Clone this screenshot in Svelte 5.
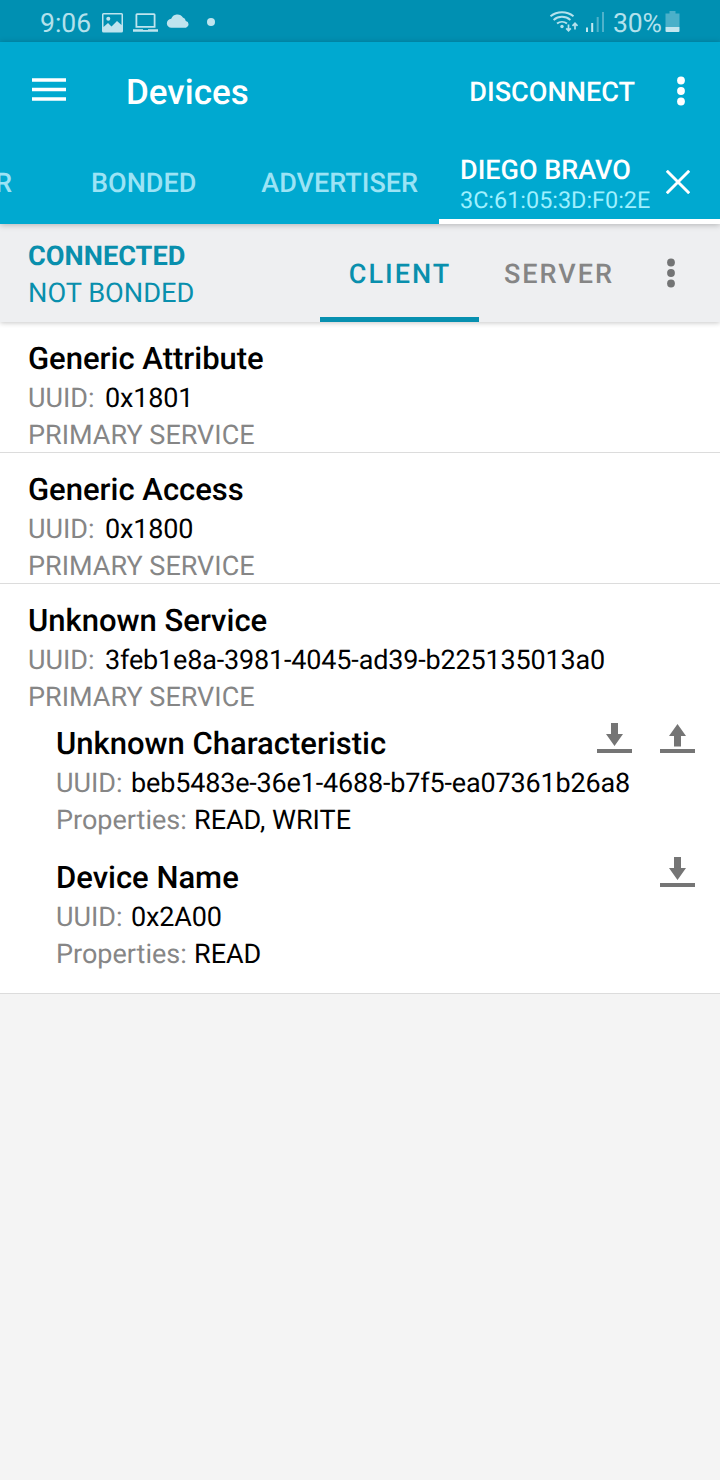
<script>
  const services = [
    { name: 'Generic Attribute', uuid: '0x1801', characteristics: [] },
    { name: 'Generic Access', uuid: '0x1800', characteristics: [] },
    {
      name: 'Unknown Service',
      uuid: '3feb1e8a-3981-4045-ad39-b225135013a0',
      characteristics: [
        { name: 'Unknown Characteristic', uuid: 'beb5483e-36e1-4688-b7f5-ea07361b26a8', props: ['READ', 'WRITE'] },
        { name: 'Device Name', uuid: '0x2A00', props: ['READ'] }
      ]
    }
  ];
</script>

<div class="screen">
  <div class="status">
    <span class="time">9:06</span>
    <svg class="notif" width="120" height="24" viewBox="100 10 120 24" fill="#bfe4ee">
      <path fill-rule="evenodd" d="M103.500 13h18a1.500 1.500 0 0 1 1.500 1.500v16.500a1.500 1.500 0 0 1-1.500 1.500h-18a1.500 1.500 0 0 1-1.500-1.500v-16.500a1.500 1.500 0 0 1 1.500-1.500zM103.500 14.500v12.500l4.500-4 3.500 3.500 5.500-5.500 4.500 4v-10.500z" />
      <circle cx="108.300" cy="18.800" r="2" />
      <path fill-rule="evenodd" d="M137 13.300h17a1.500 1.500 0 0 1 1.500 1.500v13h-20v-13a1.500 1.500 0 0 1 1.500-1.500zM137.300 15v11h16.400v-11zM133 29.300h10v.8h5v-.8h10v2.500h-25z" />
      <path d="M171.500 27.800a4.500 4.500 0 0 1-.3-9a6.500 6.500 0 0 1 11.700-1.300a4.300 4.300 0 0 1 2.900 3.500a3.500 3.500 0 0 1 .2 6.800z" />
      <circle cx="211" cy="22" r="4" />
    </svg>
    <svg class="signal" width="60" height="26" viewBox="548 8 60 26" fill="none">
      <g stroke="#b5e2ed" stroke-width="1.900">
        <path d="M550.500 16.200a18.500 18.500 0 0 1 23 0" />
        <path d="M553.600 19.900a13 13 0 0 1 16.800 0" />
        <path d="M557 23.600a8 8 0 0 1 10 0" />
      </g>
      <circle cx="562" cy="26.500" r="1.700" fill="#b5e2ed" />
      <path d="M568.500 24.500v6.300m-2.300-2.500l2.300 2.500l2.300-2.500M575 29.500v-6.300m-2.500 2.600l2.500-2.600l2.500 2.600" stroke="#b5e2ed" stroke-width="1.700" />
      <path d="M587 27.500v4.500M592.200 23v9" stroke="#c4e8f0" stroke-width="2" />
      <path d="M597.700 17v15M603 12v20" stroke="#4fb2cb" stroke-width="2" />
    </svg>
    <span class="percent">30%</span>
    <svg class="battery" width="15" height="22" viewBox="0 0 15 22">
      <path d="M4.500 0h6v2.500h4v13.500h-14v-13.500h4z" fill="#4bb0c9" />
      <path d="M.5 16h14v4q0 1-1 1h-12q-1 0-1-1z" fill="#c4e6ef" />
    </svg>
  </div>

  <header>
    <div class="toolbar">
      <svg class="menu" width="34" height="24" viewBox="0 0 34 24"><path d="M0 2h34M0 11.500h34M0 21h34" stroke="#fff" stroke-width="3.500" /></svg>
      <h1>Devices</h1>
      <span class="disconnect">DISCONNECT</span>
      <svg class="more" width="10" height="30" viewBox="0 0 10 30" fill="#fff"><circle cx="5" cy="4.500" r="3.900" /><circle cx="5" cy="15" r="3.900" /><circle cx="5" cy="25.500" r="3.900" /></svg>
    </div>
    <nav>
      <span class="tab scanner">SCANNER</span>
      <span class="tab bonded">BONDED</span>
      <span class="tab advertiser">ADVERTISER</span>
      <div class="device">
        <div class="label"><b>DIEGO BRAVO</b><span>3C:61:05:3D:F0:2E</span></div>
        <svg width="24" height="24" viewBox="0 0 24 24"><path d="M.8.800l22.400 22.400M23.200.8l-22.400 22.400" stroke="#fff" stroke-width="2.900" /></svg>
      </div>
    </nav>
  </header>

  <section class="connection">
    <div class="state"><b>CONNECTED</b><span>NOT BONDED</span></div>
    <span class="role active">CLIENT</span>
    <span class="role">SERVER</span>
    <svg class="more2" width="10" height="30" viewBox="0 0 10 30" fill="#737475"><circle cx="5" cy="4.500" r="3.900" /><circle cx="5" cy="15" r="3.900" /><circle cx="5" cy="25.500" r="3.900" /></svg>
  </section>

  <main>
    {#each services as s}
      <article>
        <h2>{s.name}</h2>
        <p class="uuid"><i>UUID:</i><span>{s.uuid}</span></p>
        <p class="type">PRIMARY SERVICE</p>
        {#if s.characteristics.length}
          <div class="chars">
            {#each s.characteristics as c}
              <div class="char">
                <div class="head">
                  <h2>{c.name}</h2>
                  <div class="actions">
                    <svg width="35" height="30" viewBox="0 0 35 30" fill="#757575"><path d="M14 0h7v11h5l-8.500 12l-8.500-12h5zM0 26h35v4h-35z" /></svg>
                    {#if c.props.includes('WRITE')}
                      <svg width="35" height="30" viewBox="0 0 35 30" fill="#757575"><path d="M17.500 1l8.500 12h-5v10.500h-7v-10.500h-5zM0 26h35v4h-35z" /></svg>
                    {/if}
                  </div>
                </div>
                <p class="uuid"><i>UUID:</i><span>{c.uuid}</span></p>
                <p class="props"><i>Properties:</i><span>{c.props.join(', ')}</span></p>
              </div>
            {/each}
          </div>
        {/if}
      </article>
    {/each}
  </main>
</div>

<style>
  :global(body) { margin: 0; background: #f4f4f4; }
  .screen { width: 720px; height: 1480px; overflow: hidden; background: #f4f4f4; font-family: Roboto, sans-serif; font-size: 27px; white-space: nowrap; text-rendering: geometricPrecision; }
  svg { display: block; flex: none; }
  i { font-style: normal; color: #868686; }
  b { font-weight: 500; }
  h1, h2, p { margin: 0; }
  .status { height: 42px; box-sizing: border-box; background: #0090b2; display: flex; align-items: flex-start; padding: 0 39px 0 40px; color: #b3e1ec; line-height: 48px; font-size: 26.500px; }
  .time { width: 60px; }
  .notif { margin: 10px 0 0 0; }
  .signal { margin: 8px 5px 0 auto; }
  .percent { width: 52px; letter-spacing: -.2px; }
  .battery { margin: 11px 1px 0 0; }
  header { position: relative; z-index: 2; height: 182px; background: #00a9d0; color: #fff; box-shadow: 0 1px 6px rgba(0, 0, 0, .25); }
  .toolbar { height: 98px; display: flex; align-items: center; padding: 0 34px 0 32px; }
  .menu { margin-top: -3px; }
  h1 { font-size: 35px; font-weight: 500; margin-left: 60px; line-height: 40px; margin-top: 4px; }
  .disconnect { font-weight: 500; font-size: 27.100px; margin-top: 2px; margin-left: auto; margin-right: 41px; }
  nav { height: 84px; display: flex; justify-content: flex-end; font-weight: 500; }
  .tab { line-height: 86px; color: #9ce3f5; }
  .scanner { margin-right: 79px; }
  .bonded { margin-right: 65px; }
  .advertiser { margin-right: 21px; }
  .device { width: 281px; flex: none; height: 84px; box-sizing: border-box; border-bottom: 5px solid #fff; display: flex; padding: 15px 30px 0 21px; justify-content: space-between; }
  .label { display: flex; flex-direction: column; line-height: 31px; }
  .label span { font-size: 23.400px; font-weight: 400; line-height: 28px; color: #9ff0ff; }
  .device svg { margin-top: 15px; }
  .connection { position: relative; z-index: 1; height: 98px; background: #eeeff1; display: flex; box-shadow: 0 1px 5px rgba(0, 0, 0, .22); }
  .state { width: 292px; padding: 14px 0 0 28px; display: flex; flex-direction: column; line-height: 37px; color: #098fad; font-size: 27.200px; }
  .state b { font-weight: 700; }
  .role { width: 159px; box-sizing: border-box; height: 98px; line-height: 100px; text-align: center; font-weight: 500; letter-spacing: 2px; color: #858585; padding-left: 1px; }
  .active { color: #098fad; border-bottom: 5px solid #0790b0; }
  .more2 { margin: 34px 0 0 28px; }
  main { background: #fff; }
  article { padding: 17px 0 0 28px; border-bottom: 1px solid #dcdcdc; color: #000; }
  h2 { font-size: 31px; font-weight: 500; line-height: 40px; margin-bottom: 1px; }
  p { line-height: 37px; display: flex; }
  .uuid i { width: 77px; }
  .uuid span { letter-spacing: -.17px; }
  .type { color: #868686; height: 35px; }
  .chars { padding: 10px 0 20px 28px; }
  .char + .char { margin-top: 19px; }
  .char .uuid i { width: 75px; }
  .char .props i { width: 138px; }
  .head { display: flex; justify-content: space-between; padding-right: 25px; }
  .actions { display: flex; gap: 28px; margin-top: -1px; }
</style>
